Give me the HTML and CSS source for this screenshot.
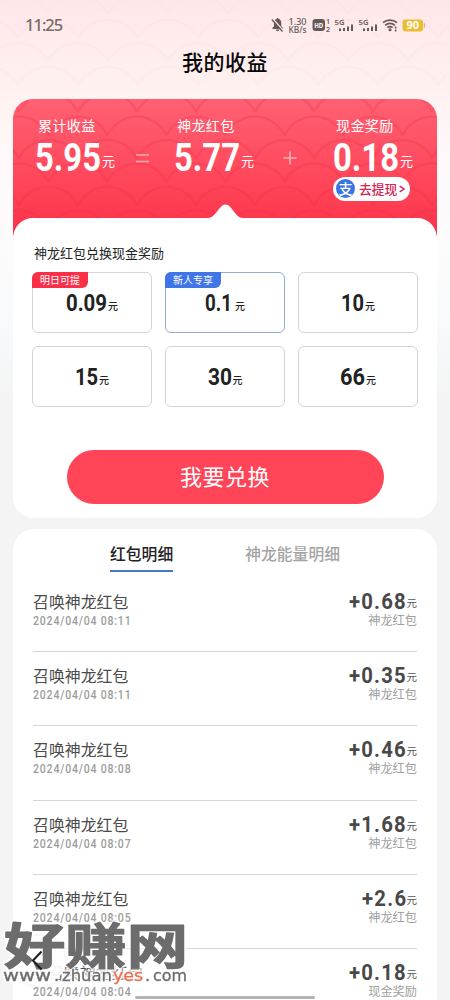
FILE: index.html
```html
<!DOCTYPE html>
<html lang="zh-CN">
<head>
<meta charset="utf-8">
<title>我的收益</title>
<link rel="stylesheet" href="styles.css">
</head>
<body>
<div class="screen">
  <svg class="page-scales" width="450" height="120" viewBox="0 0 450 120">
    <defs>
      <pattern id="bgScales" width="60" height="47" patternUnits="userSpaceOnUse" x="18" y="15">
        <path d="M0 23A34 34 0 0 1 60 23M-30 46A34 34 0 0 1 30 46M30 46A34 34 0 0 1 90 46" fill="none" stroke="#fbd9da" stroke-opacity=".2" stroke-width="2"/>
      </pattern>
    </defs>
    <rect width="450" height="85" fill="url(#bgScales)"/>
  </svg>

  <header class="statusbar">
    <span class="clock">11:25</span>
    <svg class="status-icons" width="158" height="20" viewBox="270 15 158 20">
      <g fill="#66595a">
        <path d="M272.500 29v-1.200l1.500-1.600V23c0-2.400 1.200-3.900 2.900-4.300v-.8h1.400v.8c1.900.5 3 2.200 3 4.300v3.200l1.500 1.600V29zM276 29.600h3.200a1.600 1.600 0 0 1-3.200 0z"/>
        <path d="M273 19L283 30.500" stroke="#fee9ea" stroke-width="1.600"/>
        <path d="M271.800 19.500L282.500 31.500" stroke="#66595a" stroke-width="1.300"/>
        <text x="288.500" y="24.700" class="net" textLength="18" lengthAdjust="spacingAndGlyphs">1.30</text>
        <text x="288.500" y="32.500" class="net" textLength="18" lengthAdjust="spacingAndGlyphs">KB/s</text>
        <rect x="312.500" y="19" width="12.500" height="12" rx="3"/>
        <text x="314.200" y="28" class="hd" textLength="9" lengthAdjust="spacingAndGlyphs">HD</text>
        <text x="326" y="24.300" class="tiny">1</text>
        <text x="326" y="31.500" class="tiny">2</text>
        <text x="334.500" y="24.500" class="tiny" textLength="10" lengthAdjust="spacingAndGlyphs">5G</text>
        <path d="M339 28.500h2v2.500h-2zM343 28h2v3h-2zM347 26.500h2v4.500h-2zM351 24.500h2v6.500h-2z"/>
        <text x="358.500" y="24.500" class="tiny" textLength="10" lengthAdjust="spacingAndGlyphs">5G</text>
        <path d="M363 28.500h2v2.500h-2zM367 28h2v3h-2zM371 26.500h2v4.500h-2zM375 24.500h2v6.500h-2z"/>
        <circle cx="390" cy="29.800" r="1.500"/>
        <path d="M383 22.700a10.500 10.500 0 0 1 14 0M385.200 25.300a7.200 7.200 0 0 1 9.600 0M387.400 27.700a4 4 0 0 1 5.200 0" fill="none" stroke="#66595a" stroke-width="1.700"/>
        <path d="M394.800 26.500h1.600v2h-1.600zM394.800 29.500h1.600v2h-1.600z"/>
      </g>
      <rect x="402.500" y="19.500" width="20.500" height="12" rx="3" fill="#edbd31"/>
      <path d="M423.800 22.500c1.500.8 1.500 5.200 0 6z" fill="#c9a99a"/>
      <text x="406.500" y="29" class="battery" textLength="12.500" lengthAdjust="spacingAndGlyphs">90</text>
    </svg>
  </header>

  <h1 class="title">我的收益</h1>

  <section class="card earnings">
    <svg class="card-bg" width="424" height="140" viewBox="0 0 424 140">
      <defs>
        <linearGradient id="red" x1="0" y1="0" x2="0" y2="1">
          <stop offset="0" stop-color="#ff6173"/>
          <stop offset=".6" stop-color="#ff4559"/>
          <stop offset="1" stop-color="#fb3047"/>
        </linearGradient>
        <pattern id="scales" width="59" height="46.800" patternUnits="userSpaceOnUse" x="35.500" y="14">
          <path d="M0 22.500A32.500 32.500 0 0 1 59 22.500M-29.500 45.900A32.500 32.500 0 0 1 29.500 45.900M29.500 45.900A32.500 32.500 0 0 1 88.500 45.900" fill="none" stroke="#ee2a44" stroke-opacity=".27" stroke-width="2.400"/>
        </pattern>
      </defs>
      <path d="M0 140V20A20 20 0 0 1 20 0H404A20 20 0 0 1 424 20V140z" fill="url(#red)"/>
      <path d="M0 140V20A20 20 0 0 1 20 0H404A20 20 0 0 1 424 20V140z" fill="url(#scales)"/>
      <path d="M0 141V138.500C1 127 9 119 20 119H195C203 119 206 105.500 212.500 105.500S222 119 230 119H404C415 119 423 127 424 138.500V141z" fill="#fff"/>
    </svg>
    <div class="summary">
      <div class="stat">
        <span class="stat-label">累计收益</span>
        <span class="stat-value"><svg class="num" width="66" height="32"><text x="0" y="29.500" textLength="66" lengthAdjust="spacingAndGlyphs">5.95</text></svg><i>元</i></span>
      </div>
      <svg class="sign" width="14" height="14"><path d="M0 4H13M0 10.500H13" stroke="#ffadb5" stroke-width="1.600"/></svg>
      <div class="stat">
        <span class="stat-label">神龙红包</span>
        <span class="stat-value"><svg class="num" width="66" height="32"><text x="0" y="29.500" textLength="66" lengthAdjust="spacingAndGlyphs">5.77</text></svg><i>元</i></span>
      </div>
      <svg class="sign plus" width="14" height="14"><path d="M0.500 7H13.500M7 .5V13.500" stroke="#ffadb5" stroke-width="1.600"/></svg>
      <div class="stat">
        <span class="stat-label">现金奖励</span>
        <span class="stat-value"><svg class="num" width="66" height="32"><text x="0" y="29.500" textLength="66" lengthAdjust="spacingAndGlyphs">0.18</text></svg><i>元</i></span>
        <a class="withdraw"><b class="alipay">支</b><span>去提现</span><svg width="6" height="8"><path d="M.7 1.200L5 4L.7 6.800" fill="none" stroke="#c92363" stroke-width="1.400"/></svg></a>
      </div>
    </div>
    <div class="exchange">
      <h2>神龙红包兑换现金奖励</h2>
      <div class="options">
        <div class="option"><em class="tag">明日可提</em><svg class="num" width="41" height="22"><text x="0" y="19" textLength="41" lengthAdjust="spacingAndGlyphs">0.09</text></svg><i>元</i></div>
        <div class="option active"><em class="tag blue">新人专享</em><svg class="num" width="27" height="22"><text x="0" y="19" textLength="27" lengthAdjust="spacingAndGlyphs">0.1</text></svg><i class="wide">元</i></div>
        <div class="option"><svg class="num" width="23" height="22"><text x="0" y="19" textLength="23" lengthAdjust="spacingAndGlyphs">10</text></svg><i>元</i></div>
        <div class="option"><svg class="num" width="23" height="22"><text x="0" y="19" textLength="23" lengthAdjust="spacingAndGlyphs">15</text></svg><i>元</i></div>
        <div class="option"><svg class="num" width="24" height="22"><text x="0" y="19" textLength="24" lengthAdjust="spacingAndGlyphs">30</text></svg><i>元</i></div>
        <div class="option"><svg class="num" width="25" height="22"><text x="0" y="19" textLength="25" lengthAdjust="spacingAndGlyphs">66</text></svg><i>元</i></div>
      </div>
      <button class="redeem">我要兑换</button>
    </div>
  </section>

  <section class="card details">
    <nav class="tabs"><span class="tab current">红包明细</span><span class="tab">神龙能量明细</span></nav>
    <div class="row">
      <div class="left"><p>召唤神龙红包</p><svg class="date" width="98" height="14"><text transform="scale(.88 1)" x="0" y="11" textLength="111" lengthAdjust="spacing">2024/04/04 08:11</text></svg></div>
      <div class="right"><div class="amount"><svg class="num" width="58" height="22"><text transform="scale(.9 1)" x="0" y="17.500" textLength="63" lengthAdjust="spacing">+0.68</text></svg><i>元</i></div><p>神龙红包</p></div>
    </div>
    <div class="row">
      <div class="left"><p>召唤神龙红包</p><svg class="date" width="98" height="14"><text transform="scale(.88 1)" x="0" y="11" textLength="111" lengthAdjust="spacing">2024/04/04 08:11</text></svg></div>
      <div class="right"><div class="amount"><svg class="num" width="58" height="22"><text transform="scale(.9 1)" x="0" y="17.500" textLength="63" lengthAdjust="spacing">+0.35</text></svg><i>元</i></div><p>神龙红包</p></div>
    </div>
    <div class="row">
      <div class="left"><p>召唤神龙红包</p><svg class="date" width="98" height="14"><text transform="scale(.88 1)" x="0" y="11" textLength="111" lengthAdjust="spacing">2024/04/04 08:08</text></svg></div>
      <div class="right"><div class="amount"><svg class="num" width="58" height="22"><text transform="scale(.9 1)" x="0" y="17.500" textLength="63" lengthAdjust="spacing">+0.46</text></svg><i>元</i></div><p>神龙红包</p></div>
    </div>
    <div class="row">
      <div class="left"><p>召唤神龙红包</p><svg class="date" width="98" height="14"><text transform="scale(.88 1)" x="0" y="11" textLength="111" lengthAdjust="spacing">2024/04/04 08:07</text></svg></div>
      <div class="right"><div class="amount"><svg class="num" width="58" height="22"><text transform="scale(.9 1)" x="0" y="17.500" textLength="63" lengthAdjust="spacing">+1.68</text></svg><i>元</i></div><p>神龙红包</p></div>
    </div>
    <div class="row">
      <div class="left"><p>召唤神龙红包</p><svg class="date" width="98" height="14"><text transform="scale(.88 1)" x="0" y="11" textLength="111" lengthAdjust="spacing">2024/04/04 08:05</text></svg></div>
      <div class="right"><div class="amount"><svg class="num" width="45" height="22"><text transform="scale(.9 1)" x="0" y="17.500" textLength="49" lengthAdjust="spacing">+2.6</text></svg><i>元</i></div><p>神龙红包</p></div>
    </div>
    <div class="row last">
      <div class="left"><p class="shifted">召唤神龙红包</p><svg class="date" width="98" height="14"><text transform="scale(.88 1)" x="0" y="11" textLength="111" lengthAdjust="spacing">2024/04/04 08:04</text></svg></div>
      <div class="right"><div class="amount"><svg class="num" width="58" height="22"><text transform="scale(.9 1)" x="0" y="17.500" textLength="63" lengthAdjust="spacing">+0.18</text></svg><i>元</i></div><p>现金奖励</p></div>
    </div>
  </section>

  <div class="back"></div>
  <svg class="watermark" width="200" height="80" viewBox="0 920 200 80">
    <g class="halo">
      <text x="4" y="964" class="wm-name" textLength="184" lengthAdjust="spacingAndGlyphs">好赚网</text>
      <g class="wm-url">
        <text x="3" y="981" textLength="48" lengthAdjust="spacingAndGlyphs">www</text>
        <text x="54" y="981">.</text>
        <text x="62" y="981" textLength="50" lengthAdjust="spacingAndGlyphs">zhuan</text>
        <text x="113" y="981" textLength="30" lengthAdjust="spacingAndGlyphs" class="accent">yes</text>
        <text x="145" y="981">.</text>
        <text x="153" y="981" textLength="34" lengthAdjust="spacingAndGlyphs">com</text>
      </g>
    </g>
    <path d="M41.500 951.500L33 960.500L41.500 969.500" fill="none" stroke="#1d1d1d" stroke-width="2"/>
  </svg>
  <div class="home-indicator"></div>
</div>
</body>
</html>
```
FILE: styles.css
```css
* { box-sizing: border-box; margin: 0; padding: 0; }
body { font-family: "Noto Sans CJK SC", sans-serif; background: #f4f4f4; }
i, em { font-style: normal; }
.screen {
  position: relative;
  width: 450px;
  height: 1000px;
  overflow: hidden;
  background: linear-gradient(#ffe7e8 0, #fff0f0 80px, #fff8f8 150px, #fdfcfd 250px, #f6f9fa 340px, #f4f4f4 400px);
}
.page-scales { position: absolute; left: 0; top: 0; }
.statusbar {
  position: relative;
  display: flex;
  justify-content: space-between;
  height: 40px;
  padding: 15px 22px 0 25px;
}
.clock { font: 500 16.5px/20px "Noto Sans", sans-serif; color: #75696a; letter-spacing: -1px; }
.net { font: 500 8.5px "Noto Sans", sans-serif; }
.hd { font: 700 7px "Noto Sans", sans-serif; fill: #fff; }
.tiny { font: 600 7px "Noto Sans", sans-serif; }
.battery { font: 700 10px "Noto Sans", sans-serif; fill: #fff; }
.title {
  position: relative;
  height: 59px;
  font-size: 21px;
  font-weight: 500;
  line-height: 42px;
  letter-spacing: .5px;
  text-align: center;
  color: #080808;
}
.card { width: 424px; margin: 0 auto; border-radius: 21px; background: #fff; }
.earnings { position: relative; height: 419px; margin-bottom: 10.5px; }
.card-bg { position: absolute; left: 0; top: 0; }
.summary { position: relative; display: flex; height: 119px; padding: 16px 0 0 22px; color: #fff; }
.stat { display: flex; flex-direction: column; width: 81px; }
.stat-label { padding-left: 3px; font-size: 14px; line-height: 21px; letter-spacing: .4px; white-space: nowrap; }
.stat-value { display: flex; height: 37px; align-items: flex-start; padding-top: 5px; }
.stat-value i { padding: 10px 0 0 1px; font-size: 13px; line-height: 20px; }
.num { flex: none; overflow: visible; font-family: Roboto, sans-serif; font-weight: 700; }
.stat-value .num { font-size: 38px; fill: #fff; }
.sign { margin: 36px 0 0 20px; }
.sign.plus { margin-left: 28px; }
.stat + .sign + .stat { margin-left: 24px; }
.summary .stat:last-child { margin-left: 36px; }
.withdraw {
  display: flex;
  align-items: center;
  width: 77px;
  height: 24px;
  margin-top: 3.5px;
  padding-left: 3px;
  border-radius: 12px;
  background: #fff;
  color: #d52354;
  font-size: 12.8px;
  font-weight: 500;
  line-height: 23px;
  white-space: nowrap;
}
.withdraw span { margin: 0 2px 0 4px; }
.alipay {
  width: 19px;
  height: 19px;
  border-radius: 50%;
  background: #3975e5;
  color: #fff;
  font-size: 14px;
  font-weight: 500;
  line-height: 18px;
  text-align: center;
}
.exchange { position: relative; padding: 25px 19px 0; }
.exchange h2 { padding-left: 2px; font-size: 13px; font-weight: 400; line-height: 20px; color: #222; }
.options { display: grid; grid-template-columns: repeat(3, 120px); gap: 13px; margin-top: 9px; }
.option {
  position: relative;
  display: flex;
  justify-content: center;
  height: 61px;
  padding-top: 19px;
  border: 1px solid #d5d5d9;
  border-radius: 6px;
  color: #222;
}
.option.active { border-color: #93abd9; }
.option .num { font-size: 24px; fill: #222; }
.option i { padding: 4px 0 0 1px; font-size: 10px; font-weight: 500; line-height: 19px; }
.option i.wide { padding-left: 3px; }
.tag {
  position: absolute;
  left: -1px;
  top: -1px;
  width: 56px;
  height: 16px;
  border-radius: 6px 0 6px 0;
  background: #fb2f48;
  color: #fff;
  font-size: 10px;
  line-height: 16px;
  text-align: center;
}
.tag.blue { background: #4075e8; }
.redeem {
  display: block;
  width: 317px;
  height: 54px;
  margin: 42.5px auto 0;
  padding-bottom: 3px;
  border: 0;
  border-radius: 27px;
  background: #ff4557;
  color: #fff;
  font: 400 22px/51px "Noto Sans CJK SC", sans-serif;
  letter-spacing: .5px;
}
.details { height: 490px; padding: 0 20px; }
.tabs { display: flex; gap: 72px; height: 49.5px; padding: 12px 0 0 77px; }
.tab { height: 31px; font-size: 15.800px; font-weight: 500; line-height: 25px; color: #a4a4a4; }
.tab.current { border-bottom: 2px solid #4b78c6; color: #222; }
.row {
  display: flex;
  justify-content: space-between;
  height: 74.2px;
  padding-top: 11px;
  border-bottom: 1px solid #d6d6d6;
}
.row.last { border: 0; }
.left p { font-size: 15.9px; line-height: 25px; color: #4b4b4b; }
.left p.shifted { padding-left: 15px; }
.date { display: block; overflow: visible; font: 500 12px Roboto, sans-serif; fill: #9c9c9c; }
.amount { display: flex; justify-content: flex-end; height: 23px; }
.amount .num { font-size: 22.5px; fill: #484848; margin-top: 2px; }
.amount i { font-size: 10.5px; line-height: 28px; color: #555; }
.right p { font-size: 12.2px; line-height: 16px; text-align: right; color: #a0a0a0; }
.back {
  position: absolute;
  left: 15px;
  top: 936px;
  width: 50px;
  height: 50px;
  border-radius: 50%;
  background: rgba(255, 255, 255, .93);
  box-shadow: 0 0 5px rgba(0, 0, 0, .1);
}
.watermark { position: absolute; left: 0; top: 920px; overflow: visible; }
.halo { filter: drop-shadow(0 0 .8px #fff) drop-shadow(0 0 .8px #fff) drop-shadow(0 0 .8px #fff); }
.wm-name { font: 700 49px "Noto Sans CJK SC", sans-serif; fill: #6c6c6c; stroke: #6c6c6c; stroke-width: 1.2px; stroke-linejoin: round; }
.wm-url { font: 400 16px "DejaVu Sans", sans-serif; fill: #6c6c6c; stroke: #6c6c6c; stroke-width: .3px; }
.wm-url .accent { fill: #ef6a4c; stroke: #ef6a4c; }
.home-indicator { position: absolute; left: 135px; top: 996px; width: 180px; height: 3px; border-radius: 2px; background: #b3b3b3; }
```
